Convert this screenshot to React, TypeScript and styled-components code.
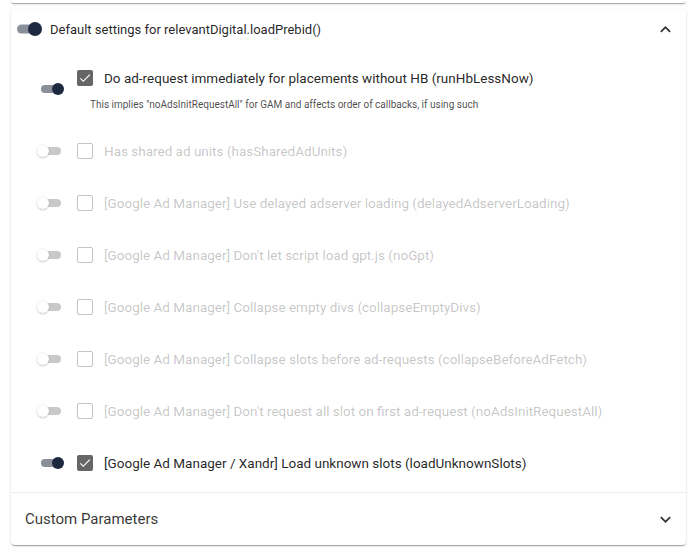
import React, { useState } from "react";
import styled, { createGlobalStyle, css } from "styled-components";

const GlobalStyle = createGlobalStyle`
  html, body {
    margin: 0;
    padding: 0;
    background: #ffffff;
    font-family: Roboto, "Liberation Sans", Arial, sans-serif;
    color: rgba(0, 0, 0, 0.87);
  }
  * { box-sizing: border-box; }
`;

type Option = {
  key: string;
  label: string;
  checked: boolean;
  description?: string;
};

const OPTIONS: Option[] = [
  {
    key: "runHbLessNow",
    label: "Do ad-request immediately for placements without HB (runHbLessNow)",
    checked: true,
    description:
      'This implies "noAdsInitRequestAll" for GAM and affects order of callbacks, if using such',
  },
  { key: "hasSharedAdUnits", label: "Has shared ad units (hasSharedAdUnits)", checked: false },
  {
    key: "delayedAdserverLoading",
    label: "[Google Ad Manager] Use delayed adserver loading (delayedAdserverLoading)",
    checked: false,
  },
  { key: "noGpt", label: "[Google Ad Manager] Don't let script load gpt.js (noGpt)", checked: false },
  {
    key: "collapseEmptyDivs",
    label: "[Google Ad Manager] Collapse empty divs (collapseEmptyDivs)",
    checked: false,
  },
  {
    key: "collapseBeforeAdFetch",
    label: "[Google Ad Manager] Collapse slots before ad-requests (collapseBeforeAdFetch)",
    checked: false,
  },
  {
    key: "noAdsInitRequestAll",
    label: "[Google Ad Manager] Don't request all slot on first ad-request (noAdsInitRequestAll)",
    checked: false,
  },
  {
    key: "loadUnknownSlots",
    label: "[Google Ad Manager / Xandr] Load unknown slots (loadUnknownSlots)",
    checked: true,
  },
];

const Chevron = ({ up }: { up?: boolean }) => (
  <ChevronIcon viewBox="0 0 24 24" $up={up}>
    <path d="M16.59 8.59 12 13.17 7.41 8.59 6 10l6 6 6-6z" fill="currentColor" />
  </ChevronIcon>
);

const App: React.FC = () => {
  const [defaults, setDefaults] = useState(true);
  const [opts, setOpts] = useState(OPTIONS);

  const toggle = (key: string) => {
    setOpts(opts.map((o) => (o.key === key ? { ...o, checked: !o.checked } : o)));
  };

  return (
    <Page>
      <GlobalStyle />
      <PrevPanel />
      <Panel $expanded>
        <Summary>
          <Switch $on={defaults} $big onClick={() => setDefaults(!defaults)}>
            <Track />
            <Thumb />
          </Switch>
          <SummaryTitle>Default settings for relevantDigital.loadPrebid()</SummaryTitle>
          <Chevron up />
        </Summary>
        <Details>
          {opts.map((o) => (
            <Row key={o.key}>
              <Switch $on={o.checked} onClick={() => toggle(o.key)}>
                <Track />
                <Thumb />
              </Switch>
              <RowBody>
                <LabelLine $enabled={o.checked}>
                  <CheckBox $checked={o.checked}>
                    {o.checked && (
                      <svg viewBox="0 0 24 24" width="14" height="14">
                        <path
                          d="M9 16.17 4.83 12l-1.42 1.41L9 19 21 7l-1.41-1.41z"
                          fill="#fff"
                        />
                      </svg>
                    )}
                  </CheckBox>
                  <span>{o.label}</span>
                </LabelLine>
                {o.description && <Description>{o.description}</Description>}
              </RowBody>
            </Row>
          ))}
        </Details>
      </Panel>
      <Panel>
        <CollapsedSummary>
          <SummaryText>Custom Parameters</SummaryText>
          <Chevron />
        </CollapsedSummary>
      </Panel>
    </Page>
  );
};

export default App;

const Page = styled.div`
  padding: 0 2px 8px 11px;
  width: 688px;
`;

const panelShadow = css`
  box-shadow: 0px 2px 1px -1px rgba(0, 0, 0, 0.2), 0px 1px 1px 0px rgba(0, 0, 0, 0.14),
    0px 1px 3px 0px rgba(0, 0, 0, 0.12);
`;

const PrevPanel = styled.div`
  height: 3px;
  background: #fff;
  border-radius: 0 0 4px 4px;
  ${panelShadow};
  margin-bottom: 6px;
`;

const Panel = styled.div<{ $expanded?: boolean }>`
  background: #fff;
  ${panelShadow};
  border-radius: ${(p) => (p.$expanded ? "4px 4px 0 0" : "0 0 4px 4px")};
  position: relative;
  ${(p) =>
    !p.$expanded &&
    css`
      &::before {
        content: "";
        position: absolute;
        top: -1px;
        left: 0;
        right: 0;
        height: 1px;
        background: rgba(0, 0, 0, 0.06);
      }
    `}
`;

const Summary = styled.div`
  display: flex;
  align-items: center;
  height: 40px;
  padding: 0 10px 0 5px;
  cursor: pointer;
`;

const CollapsedSummary = styled(Summary)`
  height: 52px;
  padding-left: 14px;
`;

const SummaryTitle = styled.div`
  flex: 1;
  font-size: 13px;
  margin-left: 8px;
  color: rgba(0, 0, 0, 0.87);
`;

const SummaryText = styled.div`
  flex: 1;
  font-size: 15px;
  color: rgba(0, 0, 0, 0.8);
`;

const ChevronIcon = styled.svg<{ $up?: boolean }>`
  width: 21px;
  height: 21px;
  color: rgba(0, 0, 0, 0.8);
  transform: ${(p) => (p.$up ? "rotate(180deg)" : "none")};
`;

const Details = styled.div`
  padding: 3px 0 4px 28px;
`;

const Row = styled.div`
  display: flex;
  align-items: center;
  padding: 14px 0;
`;

const Track = styled.span``;
const Thumb = styled.span``;

const Switch = styled.span<{ $on: boolean; $big?: boolean }>`
  position: relative;
  display: inline-block;
  flex: none;
  width: 26px;
  height: 16px;
  cursor: pointer;
  opacity: ${(p) => (p.$on ? 1 : 0.55)};

  ${Track} {
    position: absolute;
    left: ${(p) => (p.$big ? 1 : 2)}px;
    top: 50%;
    transform: translateY(-50%);
    width: 20px;
    height: ${(p) => (p.$big ? 9 : 8)}px;
    border-radius: 5px;
    background: ${(p) => (p.$on ? "#8a9099" : "#9e9e9e")};
  }

  ${Thumb} {
    position: absolute;
    top: 50%;
    transform: translateY(-50%);
    width: ${(p) => (p.$big ? 14 : 12)}px;
    height: ${(p) => (p.$big ? 14 : 12)}px;
    border-radius: 50%;
    left: ${(p) => (p.$on ? (p.$big ? "12px" : "13px") : "-2px")};
    background: ${(p) => (p.$on ? "#1d2940" : "#fff")};
    box-shadow: ${(p) =>
      p.$on ? "none" : "0 1px 2px rgba(0,0,0,0.35), 0 0 1px rgba(0,0,0,0.2)"};
  }
`;

const RowBody = styled.div`
  display: flex;
  flex-direction: column;
  margin-left: 12px;
`;

const LabelLine = styled.label<{ $enabled: boolean }>`
  display: flex;
  align-items: center;
  height: 24px;
  font-size: 13.5px;
  color: ${(p) => (p.$enabled ? "rgba(0,0,0,0.87)" : "rgba(0,0,0,0.24)")};
  white-space: nowrap;
`;

const CheckBox = styled.span<{ $checked: boolean }>`
  display: inline-flex;
  align-items: center;
  justify-content: center;
  width: 16px;
  height: 16px;
  margin-right: 11px;
  border-radius: 2px;
  flex: none;
  ${(p) =>
    p.$checked
      ? css`
          background: #666;
        `
      : css`
          border: 1.5px solid #c4c4c4;
        `}
`;

const Description = styled.div`
  margin-top: 9px;
  margin-left: 13px;
  font-size: 10px;
  line-height: 12px;
  color: rgba(0, 0, 0, 0.72);
`;
